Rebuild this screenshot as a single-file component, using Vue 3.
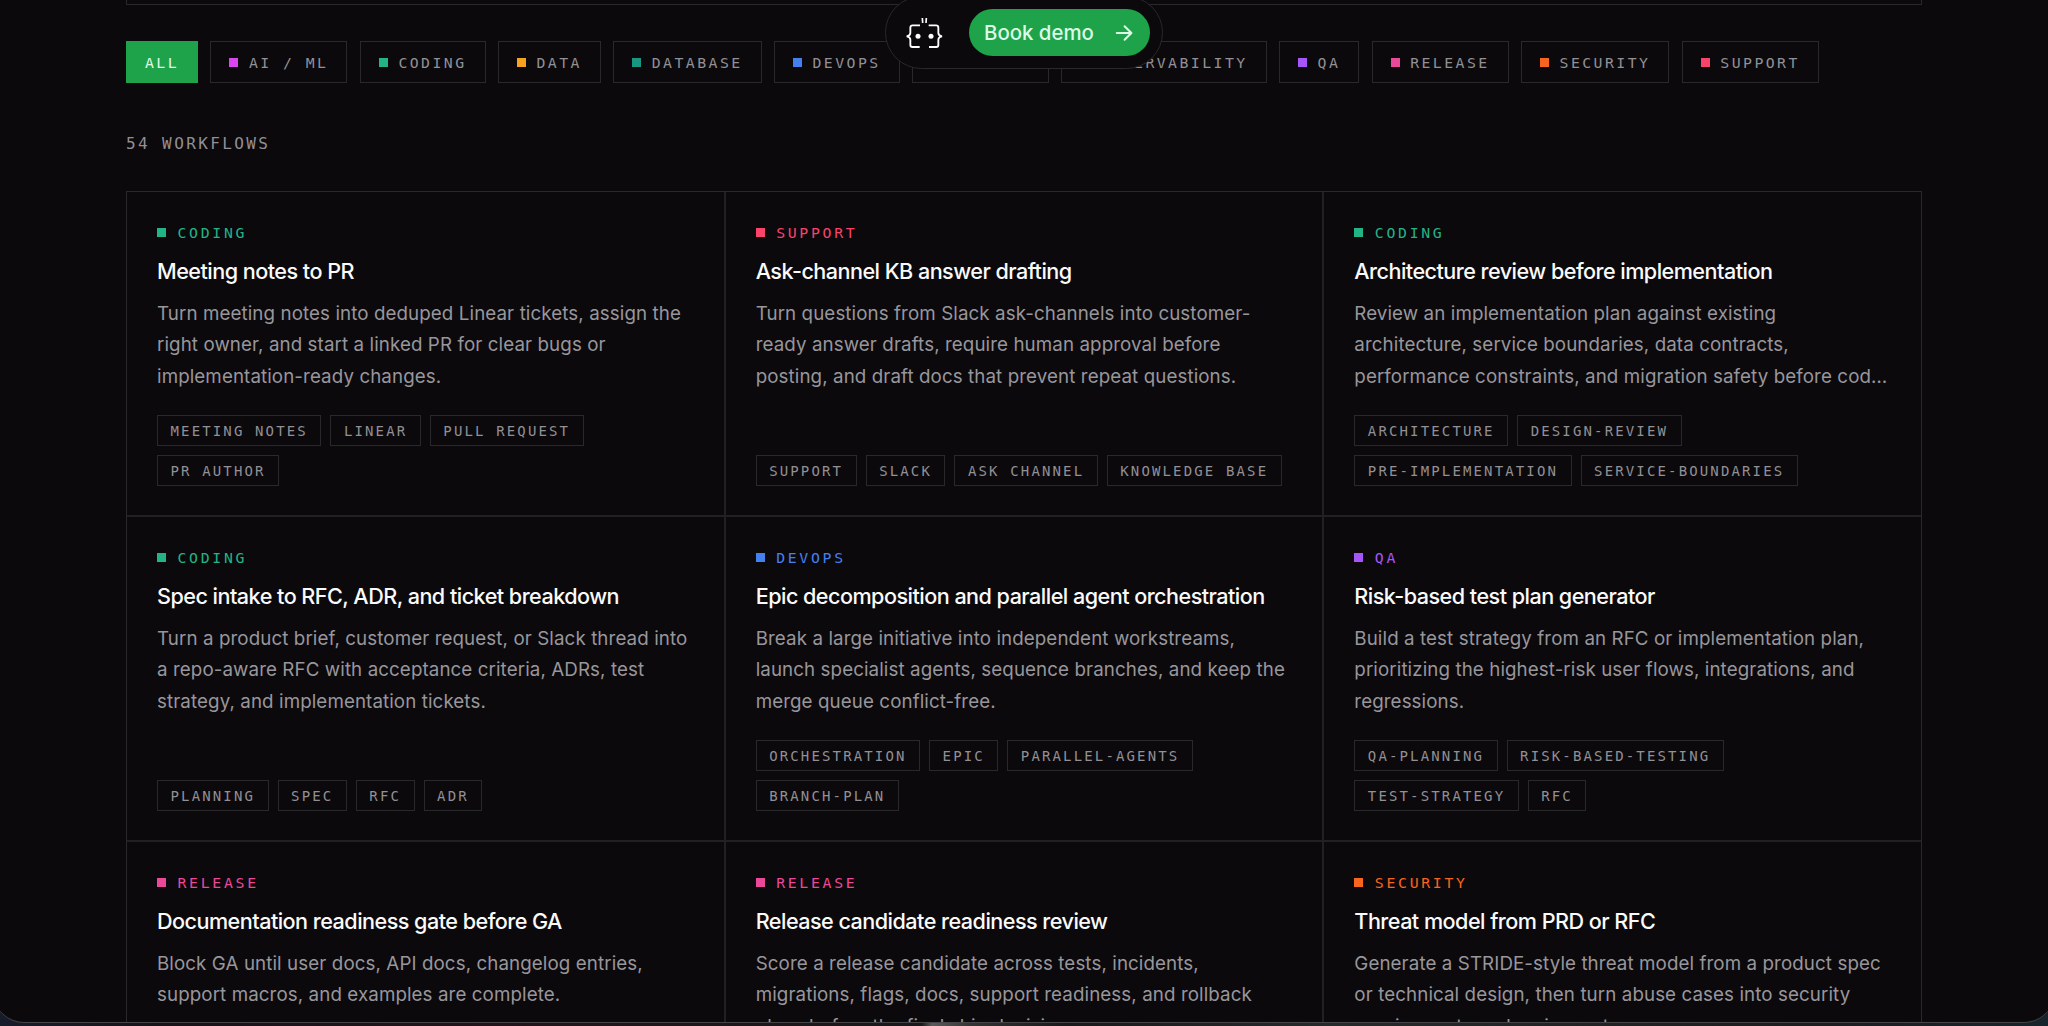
<template>
  <div class="desktop">
    <div class="window">
      <div class="book-pill">
        <svg class="bot-icon" viewBox="140 48 110 96" fill="none" stroke="#fff" stroke-width="5.5">
          <path d="M182 73H160Q153 73 153 80V96Q153 104 142 106Q153 108 153 116V132Q153 138 159 138H181" />
          <path d="M208 73H230Q237 73 237 80V96Q237 104 248 106Q237 108 237 116V132Q237 138 231 138H209" />
          <path d="M189 51L190 66M201 51L200 66" stroke-width="5" />
          <circle cx="176" cy="106" r="7.5" fill="#fff" stroke="none" />
          <circle cx="215" cy="106" r="7.5" fill="#fff" stroke="none" />
        </svg>
        <button class="book-button" type="button">
          <span>Book demo</span>
          <svg class="arrow-icon" viewBox="0 0 18 18" fill="none" stroke="currentColor" stroke-width="2" stroke-linecap="round" stroke-linejoin="round">
            <path d="M1.8 9H16.2M9.6 2.2L16.4 9L9.6 15.8" />
          </svg>
        </button>
      </div>

      <main class="content">
        <div class="search-panel"></div>

        <div class="filters">
          <button
            v-for="filter in filters"
            :key="filter"
            type="button"
            class="filter"
            :class="{ active: filter === selected }"
            @click="selected = filter"
          >
            <span v-if="colors[filter]" class="dot" :style="{ backgroundColor: colors[filter] }"></span>
            <span>{{ filter }}</span>
          </button>
        </div>

        <p class="count">54 workflows</p>

        <div class="grid">
          <article v-for="item in visible" :key="item.title" class="card">
            <div class="category" :style="{ color: colors[item.category] }">
              <span class="dot"></span>
              <span>{{ item.category }}</span>
            </div>
            <h3>{{ item.title }}</h3>
            <p class="description">{{ item.text }}</p>
            <div class="tags">
              <span v-for="tag in item.tags" :key="tag" class="tag">{{ tag }}</span>
            </div>
          </article>
        </div>
      </main>
    </div>
  </div>
</template>

<script setup>
import { computed, ref } from 'vue'

const colors = {
  'AI / ML': '#d946ef',
  Coding: '#22b486',
  Data: '#f5a31f',
  Database: '#199582',
  DevOps: '#4580f0',
  General: '#8b8b92',
  Observability: '#06b6d4',
  QA: '#a855f7',
  Release: '#ec4899',
  Security: '#f9641e',
  Support: '#f9436a'
}

const filters = ['All', ...Object.keys(colors)]
const selected = ref('All')

const workflows = [
  {
    category: 'Coding',
    title: 'Meeting notes to PR',
    text: 'Turn meeting notes into deduped Linear tickets, assign the right owner, and start a linked PR for clear bugs or implementation-ready changes.',
    tags: ['Meeting notes', 'Linear', 'Pull request', 'PR author']
  },
  {
    category: 'Support',
    title: 'Ask-channel KB answer drafting',
    text: 'Turn questions from Slack ask-channels into customer-ready answer drafts, require human approval before posting, and draft docs that prevent repeat questions.',
    tags: ['Support', 'Slack', 'Ask channel', 'Knowledge base']
  },
  {
    category: 'Coding',
    title: 'Architecture review before implementation',
    text: 'Review an implementation plan against existing architecture, service boundaries, data contracts, performance constraints, and migration safety before code is written.',
    tags: ['architecture', 'design-review', 'pre-implementation', 'service-boundaries']
  },
  {
    category: 'Coding',
    title: 'Spec intake to RFC, ADR, and ticket breakdown',
    text: 'Turn a product brief, customer request, or Slack thread into a repo-aware RFC with acceptance criteria, ADRs, test strategy, and implementation tickets.',
    tags: ['Planning', 'Spec', 'RFC', 'ADR']
  },
  {
    category: 'DevOps',
    title: 'Epic decomposition and parallel agent orchestration',
    text: 'Break a large initiative into independent workstreams, launch specialist agents, sequence branches, and keep the merge queue conflict-free.',
    tags: ['orchestration', 'epic', 'parallel-agents', 'branch-plan']
  },
  {
    category: 'QA',
    title: 'Risk-based test plan generator',
    text: 'Build a test strategy from an RFC or implementation plan, prioritizing the highest-risk user flows, integrations, and regressions.',
    tags: ['qa-planning', 'risk-based-testing', 'test-strategy', 'RFC']
  },
  {
    category: 'Release',
    title: 'Documentation readiness gate before GA',
    text: 'Block GA until user docs, API docs, changelog entries, support macros, and examples are complete.',
    tags: []
  },
  {
    category: 'Release',
    title: 'Release candidate readiness review',
    text: 'Score a release candidate across tests, incidents, migrations, flags, docs, support readiness, and rollback plans before the final ship decision.',
    tags: []
  },
  {
    category: 'Security',
    title: 'Threat model from PRD or RFC',
    text: 'Generate a STRIDE-style threat model from a product spec or technical design, then turn abuse cases into security requirements and review gates.',
    tags: []
  }
]

const visible = computed(() =>
  selected.value === 'All' ? workflows : workflows.filter(w => w.category === selected.value)
)
</script>

<style>
body {
  margin: 0;
  background: #0f1115;
}
</style>

<style scoped>
.desktop {
  height: 1026px;
  overflow: hidden;
  background: linear-gradient(90deg, #171c2a 0, #171318 8%, #21141a 24%, #19181a 45%, #5a5a5a 45.5%, #333233 47.5%, #19181a 52%, #252a2b 65%, #1d1c1e 88%, #16242b 100%);
}

.window {
  position: relative;
  height: 1023px;
  margin: 0 -6px;
  box-sizing: border-box;
  border-bottom: 1px solid #454548;
  border-radius: 0 0 30px 30px;
  background: #0b090c;
  overflow: hidden;
}

.content {
  width: 1796px;
  margin: 0 auto;
}

.search-panel {
  height: 5px;
  box-sizing: border-box;
  border: 1px solid #29282b;
  border-top: 0;
}

/* カテゴリの絞り込み */
.filters {
  display: flex;
  gap: 12.3px;
  margin-top: 36px;
}

.filter {
  display: flex;
  align-items: center;
  gap: 10.6px;
  flex-shrink: 0;
  height: 42px;
  box-sizing: border-box;
  padding: 0 18px;
  border: 1px solid #29282b;
  background: transparent;
  color: #929095;
  font-family: "DejaVu Sans Mono", monospace;
  font-size: 14.8px;
  letter-spacing: 2.45px;
  text-transform: uppercase;
}

.filter.active {
  border-color: #1fa34a;
  background: #1fa34a;
  color: #dcfce7;
}

.dot {
  width: 9px;
  height: 9px;
  flex-shrink: 0;
}

.count {
  margin: 48px 0 0;
  height: 24px;
  color: #929095;
  font-family: "DejaVu Sans Mono", monospace;
  font-size: 16px;
  line-height: 26px;
  letter-spacing: 2.4px;
  text-transform: uppercase;
}

/* 罫線はgapから見える背景色 */
.grid {
  display: grid;
  grid-template-columns: repeat(3, 1fr);
  gap: 2px;
  margin-top: 36px;
  border: 1px solid #29282b;
  background: #212023;
}

.card {
  display: flex;
  flex-direction: column;
  height: 323px;
  box-sizing: border-box;
  padding: 30px 29px 29px 30px;
  background: #0b090c;
}

.category {
  display: flex;
  align-items: center;
  gap: 11.5px;
  height: 21px;
  font-family: "DejaVu Sans Mono", monospace;
  font-size: 14.8px;
  letter-spacing: 2.7px;
  text-transform: uppercase;
}

.category .dot {
  background: currentColor;
}

h3 {
  margin: 13px 0 0;
  color: #fafafa;
  font-family: Inter, sans-serif;
  font-size: 21.6px;
  font-weight: 500;
  line-height: 30px;
  letter-spacing: -0.53px;
  white-space: nowrap;
}

.description {
  display: -webkit-box;
  -webkit-box-orient: vertical;
  -webkit-line-clamp: 3;
  flex-shrink: 0;
  margin: 12px 0 0;
  overflow: hidden;
  color: #98969b;
  font-family: Inter, sans-serif;
  font-size: 18.75px;
  line-height: 31.3px;
  letter-spacing: 0.09px;
}

.tags {
  display: flex;
  flex-wrap: wrap;
  gap: 9px;
  margin-top: auto;
}

.tag {
  height: 31px;
  box-sizing: border-box;
  padding: 0 12.5px;
  border: 1px solid #29282b;
  color: #929095;
  font-family: "DejaVu Sans Mono", monospace;
  font-size: 14px;
  line-height: 30px;
  letter-spacing: 2.14px;
  text-transform: uppercase;
}

/* 画面上部に浮くボタン */
.book-pill {
  position: absolute;
  top: -4px;
  left: 891px;
  z-index: 1;
  display: flex;
  align-items: center;
  justify-content: space-between;
  width: 278px;
  height: 73px;
  box-sizing: border-box;
  padding: 0 12px 0 20px;
  border: 1px solid #29282b;
  border-radius: 37px;
  background: #0b090c;
}

.bot-icon {
  width: 36.7px;
  height: 32px;
}

.book-button {
  display: flex;
  align-items: center;
  justify-content: space-between;
  width: 181px;
  height: 47px;
  padding: 0 17px 0 15px;
  border: 0;
  border-radius: 24px;
  background: #1fa34a;
  color: #dcfce7;
  font-family: Inter, sans-serif;
  font-size: 20.4px;
  font-weight: 500;
}

.arrow-icon {
  width: 18px;
  height: 18px;
}
</style>
